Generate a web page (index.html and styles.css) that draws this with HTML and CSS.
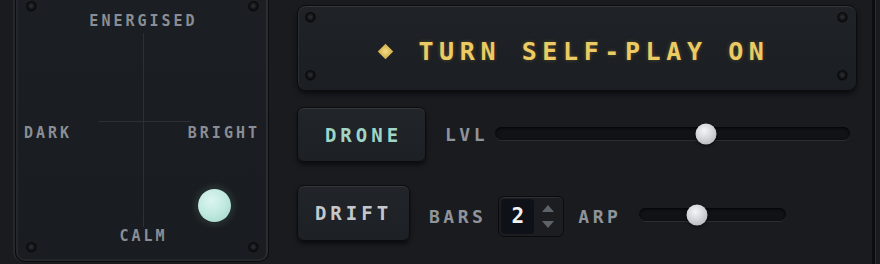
FILE: index.html
```html
<!DOCTYPE html>
<html lang="en">

<head>
    <meta charset="UTF-8">
    <title>Self-play rack</title>
    <link rel="stylesheet" href="styles.css">
</head>

<body>
    <div class="rack">
        <!-- Mood pad -->
        <div class="xy-pad">
            <span class="screw screw-tl"></span>
            <span class="screw screw-tr"></span>
            <span class="screw screw-bl"></span>
            <span class="screw screw-br"></span>

            <span class="cross cross-v"></span>
            <span class="cross cross-h"></span>

            <div class="pad-label">ENERGISED</div>
            <div class="pad-middle">
                <span class="pad-label">DARK</span>
                <span class="pad-label">BRIGHT</span>
            </div>
            <div class="pad-label">CALM</div>

            <span class="pad-knob" style="left: 198px; top: 205px;"></span>
        </div>

        <!-- Controls -->
        <div class="controls">
            <button type="button" class="plate">
                <span class="screw screw-tl"></span>
                <span class="screw screw-tr"></span>
                <span class="screw screw-bl"></span>
                <span class="screw screw-br"></span>
                <span class="diamond"></span>
                <span class="plate-text">TURN SELF-PLAY ON</span>
            </button>

            <div class="row row-drone">
                <button type="button" class="btn btn-drone">DRONE</button>
                <span class="label">LVL</span>
                <div class="track track-wide">
                    <span class="thumb" style="left: 59.4%;"></span>
                </div>
            </div>

            <div class="row row-drift">
                <button type="button" class="btn btn-drift">DRIFT</button>
                <span class="label">BARS</span>
                <div class="stepper">
                    <span class="stepper-value">2</span>
                    <span class="stepper-arrows">
                        <span class="arrow arrow-up"></span>
                        <span class="arrow arrow-down"></span>
                    </span>
                </div>
                <span class="label label-arp">ARP</span>
                <div class="track track-short">
                    <span class="thumb" style="left: 39.5%;"></span>
                </div>
            </div>
        </div>
    </div>
</body>

</html>
```

FILE: styles.css
```css
/* General */
body {
    margin: 0;
    padding: 0;
    background: #191b1f;
    font-family: 'DejaVu Sans Mono', monospace;
    font-weight: bold;
    overflow: hidden;
}

.rack {
    display: flex;
    width: 857px;
    height: 264px;
    padding-left: 15px;
    border-right: 3px solid #0c0d0f;
    box-shadow: 1px 0 0 #2a2d31;
}

/* Screws */
.screw {
    position: absolute;
    width: 11px;
    height: 11px;
    border-radius: 50%;
    background: radial-gradient(circle at 48% 45%, #2f3237 0, #1b1d21 28%, #08090a 55%, #1e2024 75%, #2a2d31 100%);
}

.screw-tl { left: 10px; top: 1px; }
.screw-tr { right: 9px; top: 1px; }
.screw-bl { left: 10px; bottom: 8px; }
.screw-br { right: 9px; bottom: 8px; }

/* Mood pad */
.xy-pad {
    position: relative;
    display: flex;
    flex-direction: column;
    box-sizing: border-box;
    width: 254px;
    height: 262px;
    padding: 12px 8px 16px;
    background: linear-gradient(#1b1e22, #191c20);
    border: 1px solid #0b0c0e;
    border-top: none;
    border-radius: 0 0 10px 10px;
    box-shadow: inset 2px 0 0 #24272b, inset -2px 0 0 #2a2d31, inset 0 -2px 0 #24272b, -2px 0 0 #24272b;
}

.pad-label {
    font-size: 15px;
    line-height: 18px;
    letter-spacing: 3px;
    color: #8a8e94;
    text-align: center;
    padding-left: 3px;
}

.pad-middle {
    flex: 1;
    display: flex;
    justify-content: space-between;
    align-items: center;
    padding-top: 8px;
}

.pad-middle .pad-label {
    padding-left: 0;
}

.cross {
    position: absolute;
    background: #2c2f34;
}

.cross-v {
    left: 127px;
    top: 33px;
    width: 1px;
    height: 194px;
}

.cross-h {
    left: 82px;
    top: 121px;
    width: 93px;
    height: 1px;
}

.pad-knob {
    position: absolute;
    width: 33px;
    height: 33px;
    margin: -16px 0 0 -16px;
    border-radius: 50%;
    background: radial-gradient(circle at 40% 35%, #dcf5ef 0, #c2eae1 45%, #9fd3c7 100%);
    box-shadow: 0 0 10px rgba(170, 230, 215, 0.25), 0 0 2px rgba(0, 0, 0, 0.8);
}

/* Controls */
.controls {
    display: flex;
    flex-direction: column;
    width: 560px;
    margin-left: 28px;
    padding-top: 5px;
}

.plate {
    position: relative;
    display: flex;
    align-items: center;
    justify-content: center;
    gap: 27px;
    height: 86px;
    padding: 6px 4px 0 0;
    font-family: inherit;
    font-weight: bold;
    background: linear-gradient(#1f2226, #1b1e22);
    border: 1px solid #0b0c0e;
    border-radius: 9px;
    box-shadow: inset 0 1px 0 #34373c, inset 1px 0 0 #2a2d31, 0 3px 5px rgba(0, 0, 0, 0.55);
    cursor: pointer;
}

.plate .screw-tl { left: 7px; top: 6px; }
.plate .screw-tr { right: 8px; top: 6px; }
.plate .screw-bl { left: 7px; bottom: 9px; }
.plate .screw-br { right: 8px; bottom: 9px; }

.diamond {
    width: 11px;
    height: 11px;
    transform: rotate(45deg);
    background: radial-gradient(circle, #f3df93 0, #e6c866 40%, #c9a84a 100%);
}

.plate-text {
    font-size: 25px;
    letter-spacing: 5.6px;
    color: #ebcb62;
    text-shadow: 0 0 4px rgba(235, 200, 90, 0.25);
}

.row {
    display: flex;
    align-items: center;
}

.row-drone {
    margin-top: 16px;
}

.row-drift {
    margin-top: 23px;
}

.btn {
    box-sizing: border-box;
    padding: 0;
    font-family: inherit;
    font-weight: bold;
    font-size: 19px;
    letter-spacing: 4px;
    background: linear-gradient(#212428, #1d2024);
    border: 1px solid #0b0c0e;
    border-radius: 7px;
    box-shadow: inset 0 1px 0 #34373c, 0 3px 4px rgba(0, 0, 0, 0.55);
    cursor: pointer;
}

.btn-drone {
    width: 129px;
    height: 55px;
    color: #9fd5c6;
    padding-left: 4px;
}

.btn-drift {
    width: 113px;
    height: 56px;
    color: #c4c8cd;
}

.label {
    font-size: 18px;
    letter-spacing: 3.5px;
    color: #8f939a;
}

.row-drone .label {
    margin: 0 7px 0 19px;
}

.row-drift .label {
    margin: 6px 12px 0 19px;
}

.row-drift .label-arp {
    margin-left: 14px;
    margin-right: 18px;
}

/* Sliders */
.track {
    position: relative;
    box-sizing: border-box;
    height: 13px;
    background: #101215;
    border-radius: 7px;
    box-shadow: inset 0 1px 3px rgba(0, 0, 0, 0.9), 0 1px 0 #2a2d31;
}

.track-wide {
    flex: 1;
    margin: -2px 7px 0 0;
}

.track-short {
    width: 147px;
    margin-top: 3px;
}

.thumb {
    position: absolute;
    top: 50%;
    width: 21px;
    height: 21px;
    transform: translate(-50%, -50%);
    border-radius: 50%;
    background: radial-gradient(circle at 42% 35%, #f4f5f7 0, #d6d9dd 40%, #a7abb1 100%);
    box-shadow: 0 1px 3px rgba(0, 0, 0, 0.7);
}

/* Stepper */
.stepper {
    display: flex;
    align-items: center;
    box-sizing: border-box;
    width: 66px;
    height: 41px;
    margin-top: 6px;
    padding: 2px;
    background: #1b1d21;
    border: 1px solid #0a0b0d;
    border-radius: 6px;
    box-shadow: inset 0 1px 0 #2c2f34;
}

.stepper-value {
    display: flex;
    align-items: center;
    justify-content: center;
    width: 33px;
    height: 35px;
    font-size: 21px;
    color: #f1f2f4;
    background: #0e1117;
    border-radius: 4px;
}

.stepper-arrows {
    flex: 1;
    display: flex;
    flex-direction: column;
    align-items: center;
    gap: 9px;
}

.arrow {
    width: 0;
    height: 0;
    border-left: 6px solid transparent;
    border-right: 6px solid transparent;
}

.arrow-up {
    border-bottom: 7px solid #5e6269;
}

.arrow-down {
    border-top: 7px solid #5e6269;
}
```
